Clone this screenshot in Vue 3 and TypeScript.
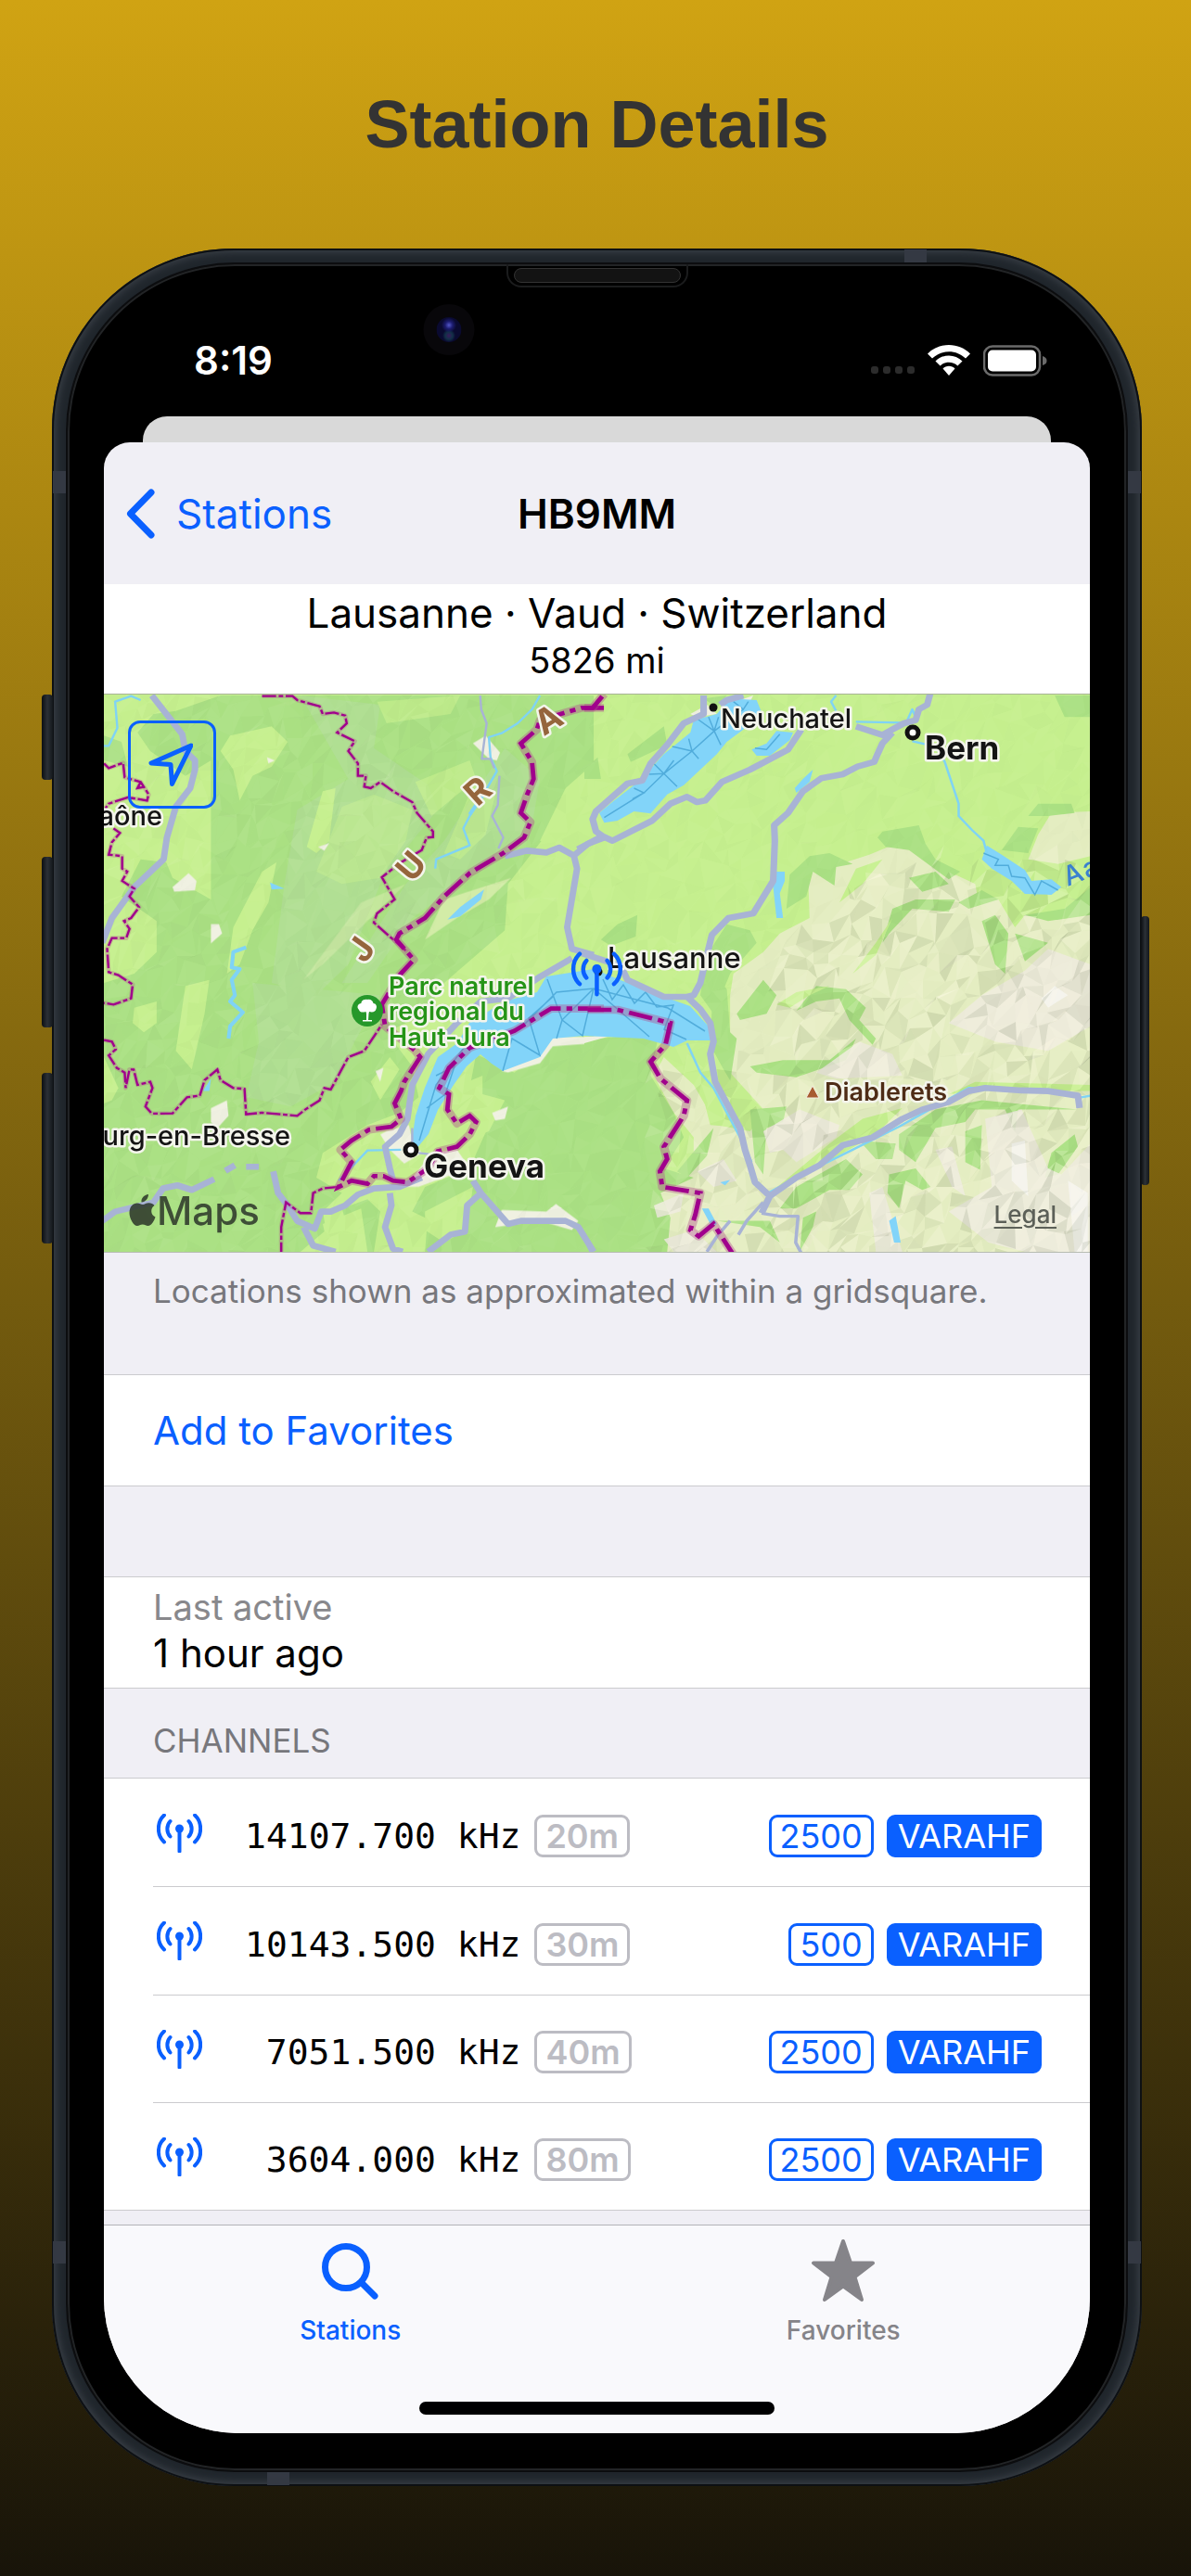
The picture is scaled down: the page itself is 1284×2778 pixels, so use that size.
<script setup lang="ts">
interface Channel {
  frequency: string
  band: string
  bandwidth: string
  mode: string
}

interface Facet {
  points: string
  fill: string
  opacity: number
}

const channels: Channel[] = [
  { frequency: '14107.700', band: '20m', bandwidth: '2500', mode: 'VARAHF' },
  { frequency: '10143.500', band: '30m', bandwidth: '500', mode: 'VARAHF' },
  { frequency: '7051.500', band: '40m', bandwidth: '2500', mode: 'VARAHF' },
  { frequency: '3604.000', band: '80m', bandwidth: '2500', mode: 'VARAHF' },
]

// Small seeded generator, so the relief shading is the same on each load
let seed = 4211
function random(): number {
  seed = (seed * 1664525 + 1013904223) % 4294967296
  return seed / 4294967296
}

// Relief strength: strong in the Alps, soft in the Jura, faint on the plateau
function relief(x: number, y: number): number {
  if (x > 830 && y > 925 && x + y > 1860) return 0.13
  if (x > 700 && y > 1130) return 0.1
  if (x < 560) return 0.03
  return 0.02
}

function buildFacets(): Facet[] {
  const cell = 15
  const cols = 73
  const rows = 43
  const grid: number[][][] = []
  for (let r = 0; r <= rows; r++) {
    const line: number[][] = []
    for (let c = 0; c <= cols; c++) {
      line.push([
        Math.round(100 + c * cell + (random() - 0.5) * 14),
        Math.round(738 + r * cell + (random() - 0.5) * 22),
      ])
    }
    grid.push(line)
  }
  const out: Facet[] = []
  for (let r = 0; r < rows; r++) {
    for (let c = 0; c < cols; c++) {
      const a = grid[r][c]
      const b = grid[r][c + 1]
      const d = grid[r + 1][c]
      const e = grid[r + 1][c + 1]
      for (const tri of [[a, b, d], [b, d, e]]) {
        const shade = random() * 2 - 1
        out.push({
          points: tri.map((p) => p.join(',')).join(' '),
          fill: shade > 0 ? '#fffbe8' : '#4a5a38',
          opacity: Math.abs(shade) * relief(a[0], a[1]) * (shade > 0 ? 2 : 1),
        })
      }
    }
  }
  return out
}
const facets = buildFacets()
</script>

<template>
  <div class="page">
    <h1 class="headline">Station Details</h1>

    <div class="phone">
      <i class="key mute"></i><i class="key vol-up"></i><i class="key vol-down"></i><i class="key power"></i>
      <i class="band b-tl"></i><i class="band b-tr"></i><i class="band b-bl"></i><i class="band b-br"></i>
      <i class="band b-top"></i><i class="band b-bottom"></i>

      <div class="bezel">
        <div class="speaker"><i></i></div>
        <div class="camera"><i></i></div>

        <header class="status">
          <span class="time">8:19</span>
          <span class="signal"><i v-for="n in 4" :key="n"></i></span>
          <svg class="wifi" viewBox="0 0 46 34" aria-hidden="true">
            <path d="M23 0C14 0 6 3.500 0 9.500L5 14.500C10 9.800 16 7.200 23 7.200S36 9.800 41 14.500L46 9.500C40 3.500 32 0 23 0Z" />
            <path d="M23 11.500C17.500 11.500 12.500 13.700 8.500 17.400L13.600 22.400C16.200 20 19.400 18.700 23 18.700S29.800 20 32.400 22.400L37.500 17.400C33.500 13.700 28.500 11.500 23 11.500Z" />
            <path d="M23 22.800C20.500 22.800 18.200 23.800 16.500 25.500L23 33L29.500 25.500C27.800 23.800 25.500 22.800 23 22.800Z" />
          </svg>
          <svg class="battery" viewBox="0 0 69 34" aria-hidden="true">
            <rect x="1" y="1.500" width="60" height="31" rx="9" fill="none" stroke="#6b6b6b" stroke-width="2.500" />
            <rect x="5" y="5.500" width="52" height="23" rx="5" fill="#fff" />
            <path d="M64 12C67.500 13 68.500 15 68.500 17S67.500 21 64 22Z" fill="#6b6b6b" />
          </svg>
        </header>

        <div class="card-behind"></div>

        <main class="sheet">
          <nav class="navbar">
            <a class="back" href="#stations">
              <svg viewBox="0 0 32 54" aria-hidden="true"><path d="M27 4L4.500 27L27 50" /></svg>
              <span>Stations</span>
            </a>
            <h2>HB9MM</h2>
          </nav>

          <section class="place">
            <p class="where">Lausanne · Vaud · Switzerland</p>
            <p class="distance">5826 mi</p>
          </section>

          <section class="map">
            <svg class="map-art" viewBox="112 749 1063 601" preserveAspectRatio="xMidYMid slice" role="img" aria-label="Map around Lausanne">
              <rect x="100" y="740" width="1090" height="620" fill="#c6f08f" />

              <!-- western land cover -->
              <g transform="translate(100 740) scale(.3444 .3333)">
                <path fill="#abe184" d="M150 560L230 570 250 620 370 690 370 240 290 290 180 210 140 150 190 90 260 80 400 30H1568V330L1480 420 1420 480 1300 640 1290 790 1100 960 1040 1060 920 1120 1000 1230 1020 1330 960 1380 860 1420 720 1510 700 1590 780 1640 720 1700 730 1760 650 1830H35V960L130 930 200 860 200 760 90 680Z" />
                <path fill="#abe184" d="M1200 1190L1320 1250 1420 1160 1568 1130V1830H1180L1100 1750 1000 1700 1040 1620 1180 1560 1240 1420 1180 1300Z" />
                <path fill="#abe184" d="M35 160L90 180 110 260 35 240ZM1050 1700L1200 1620 1180 1830H1040ZM780 1690L860 1660 900 1700 880 1830H820Z" />
                <g fill="#b0df92">
                  <path d="M650 30L900 60 880 200 1050 320 1080 400 1000 500 900 640 800 900 700 1000 560 960 600 640 640 400 800 300Z" />
                  <path d="M500 960L900 1000 820 1150 760 1280 620 1360 480 1330 520 1150Z" />
                  <path d="M1290 200L1400 300 1370 480 1200 600 1000 750 860 960 780 960 980 640 1100 500Z" />
                </g>
                <g fill="#c6f08f">
                  <path d="M430 160L560 130 610 180 560 260 500 290 460 370 440 270 400 210Z" />
                  <path d="M720 340L760 330 740 500 700 540 670 520Z" />
                  <path d="M780 390L880 350 1000 400 980 500 900 620 780 640 700 600Z" opacity=".5" />
                  <path d="M890 50L1150 30 1120 90 920 120Z" opacity=".7" />
                  <path d="M1010 310L1180 240 1200 300 1060 420Z" opacity=".7" />
                  <path d="M530 600L575 570 550 700 500 790 460 900 420 930 440 780Z" />
                  <path d="M1200 300L1260 350 1230 480 1150 560 1100 540Z" opacity=".6" />
                  <path d="M1480 330L1568 250V500L1500 520 1400 500Z" />
                  <path d="M130 1040L200 1020 200 1090 160 1120 125 1090Z" />
                  <path d="M290 970L365 950 350 1060 310 1240 260 1180Z" />
                  <path d="M35 1200L80 1300 60 1340 35 1350Z" />
                  <path d="M870 1280L930 1200 960 1240 900 1340Z" />
                  <path d="M1150 1290L1220 1260 1220 1320 1290 1340 1240 1440 1140 1480 1080 1420Z" />
                  <path d="M1040 1700L1190 1620 1170 1760 1100 1800 1040 1760Z" />
                  <path d="M720 1740L840 1690 860 1830H740Z" />
                </g>
                <g fill="#dcefb0" opacity=".8">
                  <path d="M1100 690L1310 620 1240 690 1140 750 1040 820Z" />
                  <path d="M840 700L980 640 840 780 720 900 660 950Z" opacity=".6" />
                </g>
                <g fill="#f0f1e2">
                  <path d="M250 650L300 605 325 630 320 660 255 665ZM370 770H395L405 800 370 832ZM545 230L570 240 550 250ZM705 520L740 508 725 532ZM1190 185L1230 160 1275 215 1265 240 1240 235Z" />
                  <path d="M370 1365L420 1340 425 1390 390 1430 370 1410ZM885 1245L910 1235 900 1280ZM1250 1380L1300 1360 1290 1400 1260 1405Z" />
                  <path d="M920 1440L990 1420 1000 1470 1030 1510 975 1545 930 1500 900 1450ZM1280 1245L1350 1200 1400 1190 1430 1135 1568 1135V1155L1440 1165 1400 1220 1300 1250Z" />
                  <path d="M1060 1510L1140 1500 1180 1560 1020 1620 980 1620ZM1280 1695L1420 1700 1450 1675 1520 1730 1500 1760 1400 1730 1260 1750Z" />
                </g>
              </g>

              <!-- eastern land cover -->
              <g transform="translate(630 740) scale(.3571 .3333)">
                <path fill="#e4edc1" d="M590 800L680 750 675 600 760 580 860 545 940 510 1010 530 1060 580 1180 640 1190 700 1250 690 1300 780 1330 740 1528 730V1830H240L200 1700 230 1620 330 1560 330 1460 270 1380 210 1260 240 1200 330 1290 400 1420 500 1440 550 1380 440 1250 440 1000 450 930 540 860Z" />
                <path fill="#e4edc1" d="M1340 560L1370 480 1410 410 1528 405V550L1430 575Z" />
                <path fill="#abe184" d="M0 1145L180 1125 220 1150 200 1260 270 1380 300 1460 240 1560 330 1590 230 1640 260 1720 250 1830H0Z" />
                <g fill="#abe184">
                  <path d="M0 270L40 230 50 300 0 300ZM130 220L240 130 250 190 140 245ZM50 820L100 770 160 740 155 810 80 840ZM0 100L20 130 0 160ZM360 40L430 30 400 70Z" />
                  <path d="M400 820L430 770 500 790 520 830 480 880 440 930 390 1060 350 1000 370 870Z" />
                  <path d="M610 720L620 610 680 550 740 540 810 575 760 585 755 645 690 600 670 680ZM885 490L900 470 1010 450 1030 510 1060 560 1135 600 1100 625 980 530 910 520ZM980 620L1060 600 1100 640 1020 665ZM930 720L1000 690 1120 690 1100 730 990 720 920 800 900 830ZM1130 700L1200 660 1250 690 1160 720Z" />
                  <path d="M1340 420L1370 380 1470 380 1480 410 1400 420ZM1260 530L1310 455 1370 460 1340 540ZM1200 760L1240 740 1280 800 1270 930 1240 900ZM1300 800L1400 830 1330 890ZM1330 740L1450 720 1528 650V740L1400 760ZM1420 30H1528V100H1450Z" />
                  <path d="M460 1060L540 950 580 1000 550 1060 470 1080ZM640 1050L700 970 790 980 850 1040 830 1080 880 1140 870 1160 800 1080 770 1010 700 1020ZM390 930L430 980 440 1120 460 1140 440 1280 380 1160Z" />
                  <path d="M500 1230L600 1210 740 1210 820 1140 790 1210 640 1265 520 1250ZM500 1370L610 1360 600 1410 550 1430 540 1580 515 1540ZM830 1470L940 1480 930 1530 880 1530ZM950 1450L1060 1370 1200 1340 1490 1370 1480 1370 1310 1370 1300 1440 1270 1370 1180 1370 1150 1410 1060 1430 1000 1540 950 1500Z" />
                  <path d="M1150 1440L1200 1420 1195 1565 1150 1540ZM1390 1590L1410 1510 1480 1450 1490 1490 1430 1580ZM920 1580L1000 1560 1045 1620 1020 1630 970 1600 950 1690 915 1640ZM590 1690L640 1620 790 1530 840 1580 800 1630 740 1630 640 1690ZM280 1570L390 1430 370 1520 310 1590ZM400 1730L560 1730 590 1800 530 1750ZM660 1720L700 1700 690 1750 650 1830Z" />
                </g>
                <g fill="#c6f08f">
                  <path d="M330 1070L380 1170 500 1380 500 1430 380 1420 340 1250 290 1150ZM580 1030L640 990 740 970 680 1000 620 1040ZM560 1640L740 1480 840 1400 960 1365 880 1450 700 1560ZM1100 1320L1180 1280 1528 1290V1310H1200ZM840 640L900 560 820 590 770 700ZM880 830L930 750 880 870 810 930Z" />
                </g>
                <g fill="#efebdf" opacity=".85">
                  <path d="M540 1440L650 1370 770 1420 760 1460 640 1540 600 1500 560 1510ZM700 1250L830 1150 930 1190 960 1260 760 1270ZM1100 1090L1200 1000 1330 920 1400 850 1528 900V1100L1400 1180 1240 1150Z" />
                  <path d="M1210 1400L1320 1370 1400 1560 1440 1580 1528 1480V1830H1330L1220 1800 1100 1700 1230 1620ZM860 1640L900 1620 940 1760 960 1830H880ZM340 1570L420 1530 460 1600 390 1620ZM210 1680L300 1640 290 1700 220 1720ZM1060 1500L1110 1490 1150 1650 1110 1620ZM240 1790L330 1760 400 1830H270Z" />
                </g>
                <path fill="#fafafa" opacity=".6" d="M1380 1010L1420 970 1460 1000 1400 1040ZM1290 1480L1330 1470 1340 1650 1290 1600ZM1460 1600L1520 1640V1830H1480Z" />
                <g fill="#f0f1e2"><path d="M0 1135L90 1128 0 1155ZM320 90L370 60 400 90 340 100ZM470 45L510 30 500 50Z" /></g>
              </g>

              <polygon v-for="(f, i) in facets" :key="i" :points="f.points" :fill="f.fill" :opacity="f.opacity" />

              <!-- lakes -->
              <path fill="#82d4f9" d="M444 1230L448 1203 458 1173 472 1140 493 1125 506 1103 544 1080 579 1070 589 1053 640 1045 669 1057 716 1075 744 1085 764 1107 766 1122 741 1122 726 1129 694 1120 630 1117 596 1120 582 1140 542 1155 530 1147 518 1137 503 1150 489 1170 472 1197 462 1223 448 1240Z" />
              <path class="depth" d="M452 1230L470 1170 500 1130 560 1110 600 1070 640 1066 720 1087 760 1112M590 1056L606 1100 640 1066 700 1118M600 1120L606 1100 628 1117 640 1066M542 1155L552 1120 582 1138 570 1098 596 1075M650 1056L660 1078 672 1062 684 1082 696 1070 708 1086 726 1084 716 1110 740 1121M470 1160L490 1150 480 1180 460 1195" />
              <g transform="translate(630 740) scale(.3571 .3333)">
                <path fill="#82d4f9" d="M45 410L60 442 100 435 150 405 200 412 250 350 300 320 400 220 430 180 480 140 535 85 520 45 440 40 400 90 330 110 320 150 240 220 190 280 150 320 90 370ZM505 205L520 225 560 225 620 175 630 150 580 145 550 185ZM580 600H605V630L590 670 600 750H580L570 650ZM635 330L660 300 690 270 680 310 640 345ZM1200 560L1215 515 1260 545 1330 595 1350 630 1410 625 1440 650 1410 675 1330 672 1290 630 1230 590ZM920 1730L940 1715 955 1800 935 1800ZM410 1605L440 1598 425 1615ZM355 1690L375 1690 400 1740 385 1750Z" />
                <path class="depth" d="M60 425L180 345 240 283 325 210 392 145 480 75M150 330L180 345 145 365M195 285L240 283 280 325M205 245L240 283 270 240M265 195L325 210 345 235M315 170L325 210M340 105L392 145 412 190M375 100L392 145 405 100M450 50L480 75 495 50M515 200L550 205 590 155M1205 540L1250 560 1240 580 1280 580 1290 615 1330 620 1360 675 1380 630 1430 660" />
                <g class="river">
                  <path d="M760 80L745 50 760 30M820 115L960 118 975 110 990 75 1000 100M990 178L1060 195 1088 245 1130 380 1130 420 1170 465 1205 500 1215 540M310 1155L350 1250 390 1300 480 1480 505 1540M555 1640L640 1590 800 1505 950 1425 1160 1300 1210 1300M1400 1305L1500 1330 1528 1325" />
                </g>
              </g>
              <g transform="translate(100 740) scale(.3444 .3333)">
                <path fill="#82d4f9" d="M1110 755L1150 715 1225 658 1215 690 1150 745ZM555 635L600 655 560 658ZM345 1310L370 1270 365 1310Z" />
                <g class="river">
                  <path d="M1400 30L1375 75 1330 120 1280 152 1240 165 1245 230 1265 275 1240 320 1190 400 1160 460 1180 515 1075 560 1072 590M150 45L120 32 70 50 77 135 50 193 35 193M770 1600L860 1502 965 1500" />
                  <path stroke-width="12" d="M480 845L440 860 435 910 460 915 435 950 445 1000 430 1020 470 1055 430 1100 425 1140M1220 355L1180 415" />
                </g>

                <g class="road">
                  <path d="M185 30L280 155 290 210 320 240 320 270 305 330 260 390 232 490 222 560 130 650 60 750 30 830M1290 550L1360 532 1420 538 1460 522 1506 548 1550 510 1600 490M1506 548L1516 590 1485 780 1500 850 1568 870M1500 880L1400 940 1300 1010 1215 1020 1140 1090 1050 1190 1000 1290 985 1400 960 1450 915 1490 930 1560 940 1600M30 1730L70 1700 190 1670 220 1625 265 1615 310 1630 380 1595M415 1568L445 1550M480 1555H520M565 1570L580 1640 610 1680 640 1730 695 1755 715 1700 745 1700 790 1680 830 1645 880 1625 960 1620 1030 1590M660 1750L690 1810 760 1830M930 1640L935 1680 915 1750 940 1820 970 1830M1050 1830L1120 1775 1165 1765 1172 1680 1215 1640 1190 1600M1215 1640L1300 1740 1340 1730 1480 1730 1520 1750 1568 1830" />
                </g>
                <g class="road thin">
                  <path d="M1213 30L1216 75 1233 120 1218 235 1245 235 1257 265M1273 290L1268 385 1250 420 1285 490 1270 525M1000 1430V1500M1020 1510L1060 1515" />
                </g>
              </g>
              <g class="road" transform="translate(630 740) scale(.3571 .3333)">
                <path d="M-20 528L55 485 85 500 205 435 260 380 310 358 340 375 365 370 415 310 500 270 615 205 655 140M55 485L35 470 25 430 35 405 130 315 175 305 200 250 250 190 300 120 360 90 360 30M410 60L430 45 480 30M820 130L900 158 930 140 965 120 1000 110 1010 75 1035 60 1045 20M930 150L900 185 885 220 875 245 825 260 780 285 715 298 660 340 615 410 573 450 575 500 570 630 510 735 435 750 385 805 370 870 350 960 330 1000 310 1005M-20 860L110 905 130 950 180 975 240 1005 310 1005 350 1045 380 1090 390 1150 380 1190 395 1280 470 1430 485 1500 500 1550 515 1605 560 1650 640 1590 710 1550 780 1485 870 1460 960 1400 1020 1370 1100 1345 1160 1310 1210 1300 1320 1308 1400 1310 1490 1325 1495 1365M560 1650L535 1705" />
                <path class="narrow" d="M535 1705L590 1715H645L638 1800 655 1835M370 1830L400 1780 440 1730M465 1775L490 1730 540 1670M0 1780L20 1830" />
              </g>

              <!-- borders -->
              <g transform="translate(100 740) scale(.3444 .3333)">
                <g v-for="layer in ['minor-halo', 'minor']" :key="layer" :class="layer">
                  <path d="M530 32H625L640 45 710 65 720 90 755 85 790 95 795 120 765 150 820 178 800 210 830 250V290H855L850 325 870 330 900 310 940 340 1000 375 1015 410 1065 470V488L1045 490 1030 530 965 570 905 618 945 690 890 735 880 765 985 860M35 250L50 265 95 248 100 295 150 310 175 350 170 370 110 360 50 380 40 395M150 310L140 330 165 325M65 460L85 475 60 505 50 545 92 550V590L108 600 92 630 130 655 115 680 145 715 120 750 98 760 115 785 105 815 60 815 45 850 50 925 80 935 125 965 120 1010 65 1030 35 1025M35 1145L60 1150 72 1175 50 1195 75 1235 100 1250 103 1300 115 1240H128L140 1290 180 1280 187 1300 165 1360 185 1383 250 1382 295 1330 335 1325 350 1275 390 1240 400 1275 440 1300 475 1303 480 1385 530 1380 640 1390 665 1370 710 1340 725 1300 745 1305 800 1200 850 1180 905 1095M770 1620L720 1625 690 1640 683 1705 650 1705 605 1670 590 1750 590 1830" />
                </g>
                <g v-for="layer in ['halo', 'major']" :key="layer" :class="layer">
                  <path d="M1600 70H1530L1400 110 1390 140 1340 185 1375 245 1380 300 1360 350 1350 380 1340 410 1370 440 1350 490 1285 540 1180 605 1100 680 1040 750 960 800 950 820 1005 885 960 935 905 1030 915 1100 1010 1180 1025 1200 975 1280 965 1310 945 1350 965 1400 935 1425 865 1435 810 1470 775 1500 810 1540 770 1620 810 1600 860 1610 880 1585 910 1585 940 1600 985 1605 1050 1560 1080 1505 1140 1490 1180 1450 1200 1410 1180 1390 1140 1415 1110 1370 1115 1320 1085 1300 1115 1235 1180 1170 1320 1115 1435 1043H1600" />
                </g>
              </g>
              <g transform="translate(630 740) scale(.3571 .3333)">
                <g v-for="layer in ['halo', 'major']" :key="layer" :class="layer">
                  <path d="M10 1047H100L260 1090 245 1160 200 1215 230 1270 310 1340 300 1390 240 1490 250 1530 228 1570 235 1620 350 1640 335 1710 320 1760 345 1780 390 1740 420 1790 450 1840M0 70H25L60 25" />
                </g>
              </g>

              <!-- labels -->
              <g class="city">
                <circle cx="769" cy="763" r="4.500" fill="#111" />
                <text x="777" y="785">Neuchatel</text>
                <circle cx="645" cy="1048" r="4.500" fill="#111" />
                <text class="near" x="655" y="1044">Lausanne</text>
                <text x="175" y="890" text-anchor="end">aône</text>
                <text x="313" y="1235" text-anchor="end">urg-en-Bresse</text>
                <circle class="ring" cx="984" cy="790" r="6" />
                <text class="big" x="997" y="819">Bern</text>
                <circle class="ring" cx="443" cy="1240" r="6" />
                <text class="big" x="457" y="1270">Geneva</text>
              </g>
              <circle cx="396" cy="1090" r="17" fill="#26982a" />
              <path fill="#fff" d="M396 1078C391 1077 389 1081 389.500 1082C386 1082 384 1086 387 1089C388 1092 391 1092 394.500 1091L395 1093 395 1100H391V1101.500H401V1100H397L397.500 1093 398 1091C402 1092 405 1091 405.500 1088C407 1085 405 1082 402.500 1082C402 1079 399 1077 396 1078Z" />
              <text class="park"><tspan x="419" y="1073">Parc naturel</tspan><tspan x="419" y="1100">regional du</tspan><tspan x="419" y="1128">Haut-Jura</tspan></text>
              <g class="range">
                <text transform="translate(389 1024) rotate(-55)" y="13">J</text>
                <text transform="translate(443 934) rotate(-50)" y="13">U</text>
                <text transform="translate(515 853) rotate(-42)" y="13">R</text>
                <text transform="translate(591 776) rotate(-32)" y="13">A</text>
              </g>
              <text class="stream" transform="translate(1151 956) rotate(-22)" x="0 22">Aa</text>
              <path d="M876 1171L883 1184H869Z" fill="#a85c30" stroke="#f4f0e4" stroke-width="1" />
              <text class="peak" x="889" y="1187">Diablerets</text>

              <g class="pin" transform="translate(616 1027) scale(1.120)">
                <path d="M8 1.500C-.2 9 -.2 23 8 30.500M14.500 8C10.300 12.500 10.300 20 14.500 24.500M41 1.500C49.200 9 49.200 23 41 30.500M34.500 8C38.700 12.500 38.700 20 34.500 24.500M24.500 16V40.500" />
                <circle cx="24.500" cy="16" r="4.500" />
              </g>

              <g fill="#2f3a2c" opacity=".88">
                <path d="M160 1288C160 1292 157 1296.500 152.500 1296.500C152 1292 155.500 1288.500 160 1288ZM166.500 1300C162 1303 162 1310 167.500 1312.500C166 1317 163 1322 159.500 1322C157.500 1322 156.500 1320.500 153.700 1320.500C151 1320.500 150 1322 148 1322C144 1322 139.500 1314 139.500 1308C139.500 1301 143.500 1297.500 147.800 1297.500C150.500 1297.500 152 1299 154 1299C156 1299 157.500 1297.300 160.500 1297.300C163 1297.300 165 1298.200 166.500 1300Z" />
                <text class="brand" x="169" y="1321">Maps</text>
              </g>
            </svg>
            <button class="locate" type="button" aria-label="Show my location">
              <svg viewBox="0 0 48 48" aria-hidden="true"><path d="M46 3L3 22L24 23.500L25.500 44.500Z" /></svg>
            </button>
            <a class="legal" href="#legal">Legal</a>
          </section>

          <p class="note">Locations shown as approximated within a gridsquare.</p>

          <button class="favorite" type="button">Add to Favorites</button>

          <section class="activity">
            <p class="caption">Last active</p>
            <p class="value">1 hour ago</p>
          </section>

          <h3 class="section-title">CHANNELS</h3>
          <ul class="channels">
            <li v-for="channel in channels" :key="channel.frequency">
              <svg class="antenna" viewBox="0 0 49 42" aria-hidden="true">
                <path d="M8 1.500C-.2 9 -.2 23 8 30.500M14.500 8C10.300 12.500 10.300 20 14.500 24.500M41 1.500C49.200 9 49.200 23 41 30.500M34.500 8C38.700 12.500 38.700 20 34.500 24.500M24.500 16V40.500" />
                <circle cx="24.500" cy="16" r="4.500" />
              </svg>
              <span class="frequency">{{ channel.frequency }} kHz</span>
              <span class="tag muted">{{ channel.band }}</span>
              <span class="tag outline">{{ channel.bandwidth }}</span>
              <span class="tag solid">{{ channel.mode }}</span>
            </li>
          </ul>

          <footer class="tabbar">
            <nav class="tabs">
              <a class="tab active" href="#stations">
                <svg viewBox="0 0 72 72" aria-hidden="true"><circle cx="31" cy="32" r="22.500" /><path d="M48 49L62 63" /></svg>
                <span>Stations</span>
              </a>
              <a class="tab" href="#favorites">
                <svg viewBox="0 0 72 72" aria-hidden="true"><path class="star" d="M36 4L44 27.500H68L48.500 42.500L56 67L36 52.500L16 67L23.500 42.500L4 27.500H28Z" /></svg>
                <span>Favorites</span>
              </a>
            </nav>
            <div class="home-indicator"></div>
          </footer>
        </main>
      </div>
    </div>
  </div>
</template>

<style>
body {
  margin: 0;
  background: #181409;
}
</style>

<style scoped>
.page {
  --blue: #0a60ff;
  --line: #cbcbce;
  --group: #f0eff5;
  box-sizing: border-box;
  min-height: 100vh;
  padding: 0 53px 98px 56px;
  background: linear-gradient(#d0a313, #181409);
  font-family: Inter, "Liberation Sans", sans-serif;
  color: #000;
}
.page *,
.page *::before {
  box-sizing: border-box;
}
h1, h2, h3, p, ul {
  margin: 0;
  padding: 0;
}
a {
  text-decoration: none;
}
button {
  font: inherit;
  cursor: pointer;
}
.headline {
  display: flex;
  align-items: center;
  justify-content: center;
  height: 268px;
  font: 700 72px/100px "Liberation Sans", sans-serif;
  color: #333;
}

/* device */
.phone {
  position: relative;
  padding: 17px;
  border-radius: 196px;
  background: #20262c;
  box-shadow: inset 0 0 0 2px #0d1013, inset 0 0 8px 4px #3b4148;
}
.bezel {
  position: relative;
  padding: 0 39px 40px;
  border-radius: 180px;
  background: #000;
  box-shadow: 0 0 0 2px #0c0d0f, inset 0 0 0 2px #222426;
}
.key {
  position: absolute;
  width: 12px;
  background: linear-gradient(90deg, #0c0f12, #2b3036 50%, #14181c);
  border-radius: 4px;
  left: -11px;
}
.mute { top: 481px; height: 92px; }
.vol-up { top: 656px; height: 184px; }
.vol-down { top: 889px; height: 184px; }
.power { left: auto; right: -8px; width: 9px; top: 720px; height: 290px; }
.band {
  position: absolute;
  width: 15px;
  height: 24px;
  background: #343943;
}
.b-tl, .b-bl { left: 1px; }
.b-tr, .b-br { right: 1px; }
.b-tl, .b-tr { top: 240px; }
.b-bl, .b-br { bottom: 240px; }
.b-top, .b-bottom { width: 24px; height: 15px; }
.b-top { top: 1px; right: 232px; }
.b-bottom { bottom: 1px; left: 232px; }
.speaker {
  position: absolute;
  top: 0;
  left: 50%;
  width: 196px;
  height: 25px;
  margin-left: -98px;
  padding: 4px 6px;
  border: 2px solid #1b1c1d;
  border-top: 0;
  border-radius: 0 0 16px 16px;
}
.speaker i {
  display: block;
  height: 16px;
  border: 1px solid #333;
  border-radius: 8px;
  background: #131313;
}
.camera {
  position: absolute;
  top: 43px;
  left: 36%;
  width: 55px;
  height: 55px;
  transform: translateX(-50%);
  padding: 14px;
  border-radius: 50%;
  background: #08070a;
}
.camera i {
  display: block;
  height: 27px;
  border-radius: 50%;
  background:
    radial-gradient(circle at 50% 32%, #5558c8 0, #1c1c70 4px, transparent 8px),
    radial-gradient(circle at 50% 74%, #3a1a5c 0, #123048 4px, transparent 7px),
    #0a0a30;
}

/* status bar */
.status {
  display: flex;
  align-items: center;
  height: 164px;
  padding: 44px 46px 0 97px;
  color: #fff;
}
.time {
  flex: 1;
  font-weight: 600;
  font-size: 42px;
  line-height: 48px;
}
.signal {
  display: flex;
  gap: 5px;
  align-self: center;
  margin: 20px 14px 0 0;
}
.signal i {
  width: 8px;
  height: 8px;
  border-radius: 3px;
  background: #2c2c2c;
}
.wifi {
  width: 46px;
  height: 34px;
  margin-right: 14px;
  fill: #fff;
}
.battery {
  width: 69px;
  height: 34px;
}

/* sheet */
.card-behind {
  height: 28px;
  margin: 0 42px;
  border-radius: 26px 26px 0 0;
  background: #d9d9d9;
}
.sheet {
  overflow: hidden;
  border-radius: 28px 28px 146px 146px;
  background: var(--group);
}
.navbar {
  display: grid;
  grid-template-columns: 1fr auto 1fr;
  align-items: center;
  height: 153px;
  padding: 0 24px;
}
.navbar h2 {
  font-size: 44px;
  line-height: 54px;
  font-weight: 600;
}
.back {
  display: flex;
  align-items: center;
  gap: 22px;
  color: var(--blue);
  font-size: 44px;
  line-height: 54px;
}
.back svg {
  width: 32px;
  height: 54px;
  fill: none;
  stroke: currentColor;
  stroke-width: 7;
  stroke-linecap: round;
  stroke-linejoin: round;
}
.place {
  padding: 4px 20px 13px;
  background: #fff;
  text-align: center;
}
.where {
  font-size: 44px;
  line-height: 54px;
}
.distance {
  font-size: 38px;
  line-height: 48px;
}

/* map */
.map {
  position: relative;
  margin-top: -1px;
  border-top: 1px solid #a8b595;
  border-bottom: 1px solid #b7bcb2;
}
.map-art {
  display: block;
  width: 100%;
  height: auto;
}
.map-art text {
  font-family: Inter, "Liberation Sans", sans-serif;
  paint-order: stroke;
  stroke: #f4f5ec;
  stroke-width: 5px;
  stroke-linejoin: round;
}
.depth {
  fill: none;
  stroke: #3d9ccf;
  stroke-width: 1.500;
  opacity: .7;
  vector-effect: non-scaling-stroke;
}
.river {
  fill: none;
  stroke: #7fd3f5;
  stroke-width: 7;
  stroke-linejoin: round;
}
.road {
  fill: none;
  stroke: #a8b3d5;
  stroke-width: 20;
  stroke-linejoin: round;
}
.road.thin {
  stroke-width: 7;
}
.road .narrow {
  stroke-width: 10;
}
.minor-halo {
  fill: none;
  stroke: rgba(175, 80, 140, .3);
  stroke-width: 14;
  stroke-linejoin: round;
}
.minor {
  fill: none;
  stroke: #a0008c;
  stroke-width: 7;
  stroke-dasharray: 44 8 14 8;
}
.halo {
  fill: none;
  stroke: rgba(175, 80, 140, .4);
  stroke-width: 26;
  stroke-linejoin: round;
}
.major {
  fill: none;
  stroke: #a0008c;
  stroke-width: 14;
  stroke-dasharray: 72 18 18 18;
}
.city text {
  font-size: 29px;
  font-weight: 500;
  fill: #141414;
}
.city .near {
  font-size: 31px;
}
.city .big {
  font-size: 35px;
  font-weight: 700;
}
.ring {
  fill: #fff;
  stroke: #111;
  stroke-width: 5;
}
.map-art .park {
  font-size: 27px;
  font-weight: 600;
  fill: #259417;
}
.range text {
  font-size: 37px;
  font-weight: 700;
  fill: #95653c;
  text-anchor: middle;
}
.map-art .stream {
  font-size: 29px;
  font-weight: 500;
  fill: #3a80cf;
  stroke: none;
}
.map-art .peak {
  font-size: 27px;
  font-weight: 600;
  fill: #4e2c16;
}
.map-art .brand {
  font-size: 42px;
  font-weight: 500;
  stroke: none;
}
.pin,
.antenna {
  fill: none;
  stroke: var(--blue);
  stroke-width: 3;
  stroke-linecap: round;
}
.pin {
  stroke-width: 4;
}
.pin circle,
.antenna circle {
  fill: var(--blue);
  stroke: none;
}
.locate {
  position: absolute;
  top: 28px;
  left: 26px;
  display: grid;
  place-items: center;
  width: 95px;
  height: 95px;
  padding: 0 3px 0 0;
  border: 3px solid var(--blue);
  border-radius: 13px;
  background: none;
}
.locate svg {
  width: 48px;
  height: 48px;
  fill: none;
  stroke: var(--blue);
  stroke-width: 5;
  stroke-linejoin: round;
}
.legal {
  position: absolute;
  right: 36px;
  bottom: 24px;
  color: #5c6058;
  font-size: 26px;
  line-height: 32px;
  font-weight: 500;
  text-decoration: underline;
  text-underline-offset: 4px;
}

/* list groups */
.note {
  min-height: 131px;
  padding: 19px 53px 0;
  font-size: 35px;
  line-height: 44px;
  color: #77777c;
}
.favorite {
  display: block;
  width: 100%;
  height: 121px;
  margin-bottom: 97px;
  padding: 0 53px;
  border: 0 solid var(--line);
  border-width: 1px 0;
  background: #fff;
  color: var(--blue);
  font-size: 42px;
  line-height: 54px;
  text-align: left;
}
.activity {
  padding: 9px 53px 10px;
  border: 0 solid var(--line);
  border-width: 1px 0;
  background: #fff;
}
.caption {
  font-size: 38px;
  line-height: 46px;
  color: #88888c;
}
.value {
  font-size: 42px;
  line-height: 54px;
}
.section-title {
  padding: 34px 53px 18px;
  font-size: 35px;
  line-height: 44px;
  font-weight: 400;
  color: #77777c;
}
.channels {
  display: grid;
  grid-auto-rows: 1fr;
  min-height: 467px;
  padding-left: 53px;
  border: 0 solid var(--line);
  border-width: 1px 0;
  background: #fff;
  list-style: none;
}
.channels li {
  display: flex;
  align-items: center;
  padding: 8px 52px 0 4px;
}
.channels li + li {
  border-top: 1px solid var(--line);
}
.antenna {
  flex: none;
  width: 49px;
  height: 42px;
  margin: -7px 46px 0 0;
  stroke-width: 4;
}
.frequency {
  width: 13ch;
  margin-right: 15px;
  font: 38px/46px "DejaVu Sans Mono", "Liberation Mono", monospace;
  text-align: right;
  white-space: nowrap;
}
.tag {
  height: 46px;
  padding: 0 9px;
  border: 3px solid currentColor;
  border-radius: 9px;
  font-size: 36px;
  line-height: 40px;
}
.muted {
  margin-right: auto;
  color: #bcbcc3;
  font-weight: 600;
}
.outline {
  color: var(--blue);
}
.solid {
  margin-left: 14px;
  border-color: var(--blue);
  background: var(--blue);
  color: #fff;
}

/* tab bar */
.tabbar {
  margin-top: 15px;
  padding-bottom: 20px;
  border-top: 1px solid #b3b3b7;
  background: #f9f9fc;
}
.tabs {
  display: flex;
  height: 190px;
}
.tab {
  display: flex;
  flex: 1;
  flex-direction: column;
  align-items: center;
  gap: 12px;
  padding-top: 13px;
  color: #858489;
  font-size: 28px;
  line-height: 32px;
  font-weight: 500;
}
.tab svg {
  width: 72px;
  height: 72px;
  fill: none;
  stroke: currentColor;
  stroke-width: 7;
  stroke-linecap: round;
  stroke-linejoin: round;
}
.tab .star {
  fill: currentColor;
  stroke-width: 4;
}
.tab.active {
  color: var(--blue);
}
.home-indicator {
  width: 36%;
  height: 14px;
  margin: 0 auto;
  border-radius: 7px;
  background: #000;
}
</style>
